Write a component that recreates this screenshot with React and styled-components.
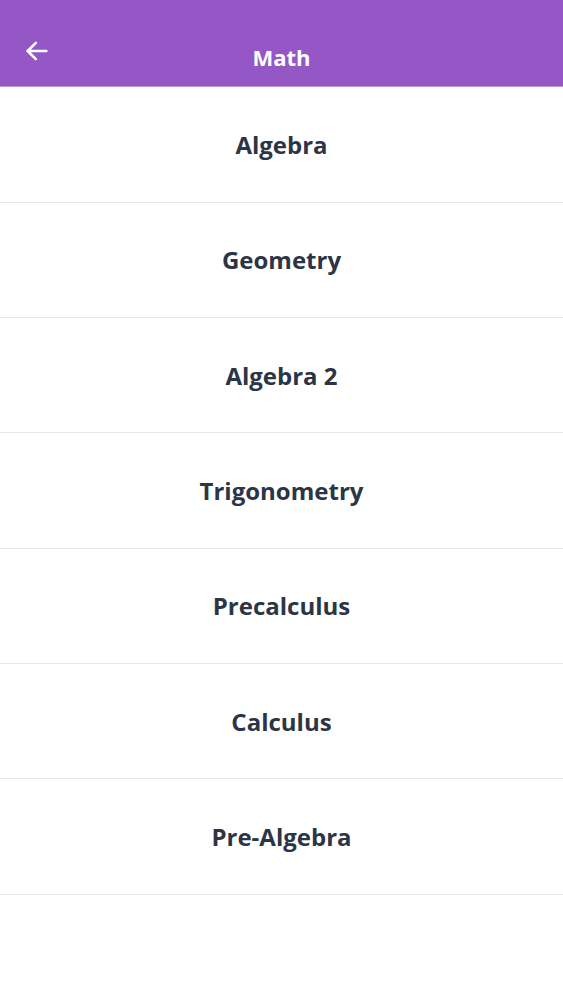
import React from 'react';
import styled, { createGlobalStyle } from 'styled-components';

const GlobalStyle = createGlobalStyle`
  body {
    margin: 0;
    background: #ffffff;
    font-family: 'Open Sans', 'Liberation Sans', sans-serif;
  }
`;

const Screen = styled.div`
  width: 563px;
  min-height: 1000px;
  background: #ffffff;
`;

const Header = styled.header`
  height: 87px;
  background: #9556c6;
  display: flex;
  align-items: center;
  position: relative;
  padding-top: 28px;
  box-sizing: border-box;
  border-bottom: 1px solid #b99ad6;
`;

const BackButton = styled.button`
  position: absolute;
  left: 22px;
  top: 36px;
  background: none;
  border: none;
  padding: 0;
  width: 30px;
  height: 30px;
  display: flex;
  align-items: center;
  justify-content: center;
  cursor: pointer;
`;

const Title = styled.h1`
  flex: 1;
  margin: 0;
  text-align: center;
  color: #ffffff;
  font-size: 22px;
  font-weight: 700;
`;

const List = styled.ul`
  list-style: none;
  margin: 0;
  padding: 0;
`;

const Item = styled.li`
  height: 114.3px;
  display: flex;
  align-items: center;
  justify-content: center;
  border-bottom: 1px solid #e8e8e8;
  color: #2c3545;
  font-size: 24px;
  font-weight: 700;
  cursor: pointer;

  &:first-child {
    height: 114.8px;
  }
`;

const subjects = [
  'Algebra',
  'Geometry',
  'Algebra 2',
  'Trigonometry',
  'Precalculus',
  'Calculus',
  'Pre-Algebra',
];

export default function App() {
  return (
    <Screen>
      <GlobalStyle />
      <Header>
        <BackButton aria-label="Back">
          <svg width="28" height="28" viewBox="0 0 24 24" fill="none" stroke="#fff" strokeWidth="2.2" strokeLinecap="round" strokeLinejoin="round">
            <path d="M20 12H4" />
            <path d="M11 5l-7 7 7 7" />
          </svg>
        </BackButton>
        <Title>Math</Title>
      </Header>
      <List>
        {subjects.map((s) => (
          <Item key={s}>{s}</Item>
        ))}
      </List>
    </Screen>
  );
}
